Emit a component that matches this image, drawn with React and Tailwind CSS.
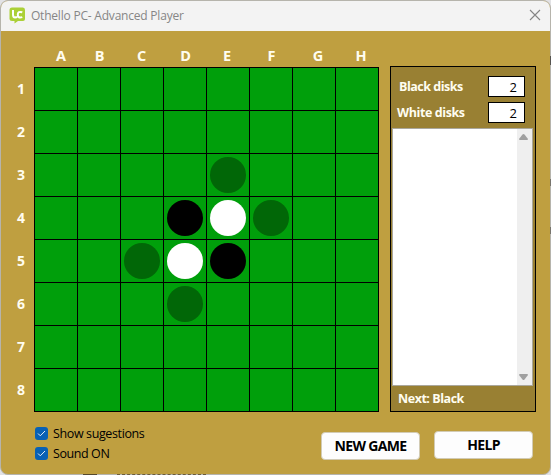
import React from "react";

const columns = [
  { label: "A", pad: "pl-[10px]" },
  { label: "B", pad: "pl-px" },
  { label: "C", pad: "pr-px" },
  { label: "D", pad: "pl-px" },
  { label: "E", pad: "pr-[2px]" },
  { label: "F", pad: "pl-px" },
  { label: "G", pad: "pl-[8px]" },
  { label: "H", pad: "pl-[8px]" },
];
const rows = ["1", "2", "3", "4", "5", "6", "7", "8"];

const discs = {
  E3: "bg-[#016707]",
  D4: "bg-black",
  E4: "bg-white",
  F4: "bg-[#016707]",
  C5: "bg-[#016707]",
  D5: "bg-white",
  E5: "bg-black",
  D6: "bg-[#016707]",
};

function TitleBar() {
  return (
    <header className="flex h-[30px] shrink-0 items-center bg-[#f3f3f3] pl-2 pr-[9px]">
      <svg width="17" height="17" viewBox="0 0 17 17" className="mb-[2px] shrink-0">
        <path d="M3 0.5H14Q16 .5 16 3V12Q16 14 14 14H9L5.5 16.5V14H3Q.5 14 .5 12V3Q.5 .5 3 .5Z" fill="#abd037" />
        <path d="M4 3V7.5Q4 10.5 6 10.5Q7.5 10.5 8 9.5M13.3 5.3Q8.8 3.8 8.8 7.7Q8.8 11.6 13.3 10.1" fill="none" stroke="#fff" strokeWidth="2" />
      </svg>
      <h1 className="ml-[5px] whitespace-nowrap text-[12px] leading-4 tracking-[-0.21px] text-[#868686]">Othello PC- Advanced Player</h1>
      <svg width="12" height="12" viewBox="0 0 12 12" className="mb-[2px] ml-auto shrink-0">
        <path d="M1 1L11 11M11 1L1 11" stroke="#858585" strokeWidth="1.1" fill="none" />
      </svg>
    </header>
  );
}

function Board() {
  return (
    <section className="w-[378px] shrink-0">
      <div className="ml-[33.5px] flex h-[22px] items-center">
        {columns.map((c) => (
          <span key={c.label} className={"w-[43px] text-center text-[14.5px] font-bold leading-5 text-[#fffdf0] " + c.pad}>
            {c.label}
          </span>
        ))}
      </div>
      <div className="flex">
        <div className="w-[33px] shrink-0">
          {rows.map((r) => (
            <div key={r} className="flex h-[43px] items-center justify-center pl-[7px] text-[14px] font-bold text-[#fffdf0]">
              {r}
            </div>
          ))}
        </div>
        <div className="grid grid-cols-[repeat(8,43px)] border-l border-t border-black bg-[#009f0b]">
          {rows.map((r) =>
            columns.map((c) => (
              <div key={c.label + r} className="flex h-[43px] items-center justify-center border-b border-r border-black">
                {discs[c.label + r] && <span className={"size-9 rounded-full " + discs[c.label + r]} />}
              </div>
            ))
          )}
        </div>
      </div>
    </section>
  );
}

function Count({ label, value, gap }) {
  return (
    <div className="flex h-[21px] items-center justify-between pr-[10px]">
      <span className={"whitespace-nowrap text-[12.5px] font-bold leading-4 text-[#fffdf0] " + gap}>{label}</span>
      <span className="h-[21px] w-[37px] border border-black bg-white pr-[7px] pt-px text-right text-[13px] leading-[19px] text-black">{value}</span>
    </div>
  );
}

function ScorePanel() {
  return (
    <aside className="ml-[11px] mt-[21px] flex h-[346px] w-[146px] flex-col border border-black bg-[#998033] pt-[9px]">
      <div className="flex flex-col gap-[5px]">
        <Count label="Black disks" value="2" gap="pl-[8px] tracking-[-0.48px]" />
        <Count label="White disks" value="2" gap="pl-[6px] tracking-[-0.4px]" />
      </div>
      <div className="ml-px mt-[5px] flex h-[258px] w-[141px] justify-end border border-[#aaa79c] bg-white">
        <div className="flex w-[15px] flex-col items-center justify-between bg-[#efefef] py-[5px] pr-[2px]">
          <svg width="9" height="6" viewBox="0 0 9 6">
            <path d="M3.5 .5Q4.5 -.5 5.5 .5L9 5Q9 6 8 6H1Q0 6 0 5Z" fill="#a0a0a0" />
          </svg>
          <svg width="9" height="6" viewBox="0 0 9 6">
            <path d="M3.5 5.5Q4.5 6.5 5.5 5.5L9 1Q9 0 8 0H1Q0 0 0 1Z" fill="#a0a0a0" />
          </svg>
        </div>
      </div>
      <p className="mt-[5px] pl-[7px] text-[12.5px] font-bold leading-4 tracking-[-0.46px] text-[#fffdf0]">Next: Black</p>
    </aside>
  );
}

function Check({ label, spacing }) {
  return (
    <label className="flex h-5 items-center">
      <span className="flex size-[13px] items-center justify-center rounded-[3px] bg-[#0861b5]">
        <svg width="9" height="7" viewBox="0 0 9 7">
          <path d="M1 3.5L3.3 5.8L8 1" fill="none" stroke="#e6effa" strokeWidth="1" />
        </svg>
      </span>
      <span className={"ml-[5px] whitespace-nowrap pt-[2px] text-[12.5px] leading-[18px] text-black " + spacing}>{label}</span>
    </label>
  );
}

function Footer() {
  const button = "h-7 w-[99px] rounded-[4px] border border-[#d2cbb4] bg-[#fdfdfd] text-[14px] font-bold leading-6 text-black ";
  return (
    <footer className="flex items-start pl-[34px]">
      <div className="mt-[11px] w-[286px]">
        <Check label="Show sugestions" spacing="tracking-[-0.38px]" />
        <Check label="Sound ON" spacing="tracking-[-0.42px]" />
      </div>
      <button className={button + "mt-5 tracking-[-0.65px]"}>NEW GAME</button>
      <button className={button + "ml-[14px] mt-[19px] tracking-[-0.65px]"}>HELP</button>
    </footer>
  );
}

export default function App() {
  return (
    <div className="relative h-[475px] w-[551px] overflow-hidden bg-[#e2e2e5] font-['Open_Sans','Noto_Sans',sans-serif]">
      <main className="flex h-full w-full flex-col overflow-hidden rounded-[8px] border border-[#b6b4ac] bg-[#bf9f40]">
        <TitleBar />
        <div className="mt-[14px] flex">
          <Board />
          <ScorePanel />
        </div>
        <Footer />
      </main>
      <div className="absolute right-0 top-[56px] h-[9px] w-px bg-[#55534f]" />
      <div className="absolute right-0 top-[179px] h-[7px] w-px bg-[#77746c]" />
      <div className="absolute right-0 top-[227px] h-[7px] w-px bg-[#77746c]" />
      <div className="absolute bottom-0 left-[83px] h-px w-[14px] bg-[#55492d]" />
      <div className="absolute bottom-0 left-[117px] w-[89px] border-b border-dashed border-[#6b5c3a]" />
    </div>
  );
}
